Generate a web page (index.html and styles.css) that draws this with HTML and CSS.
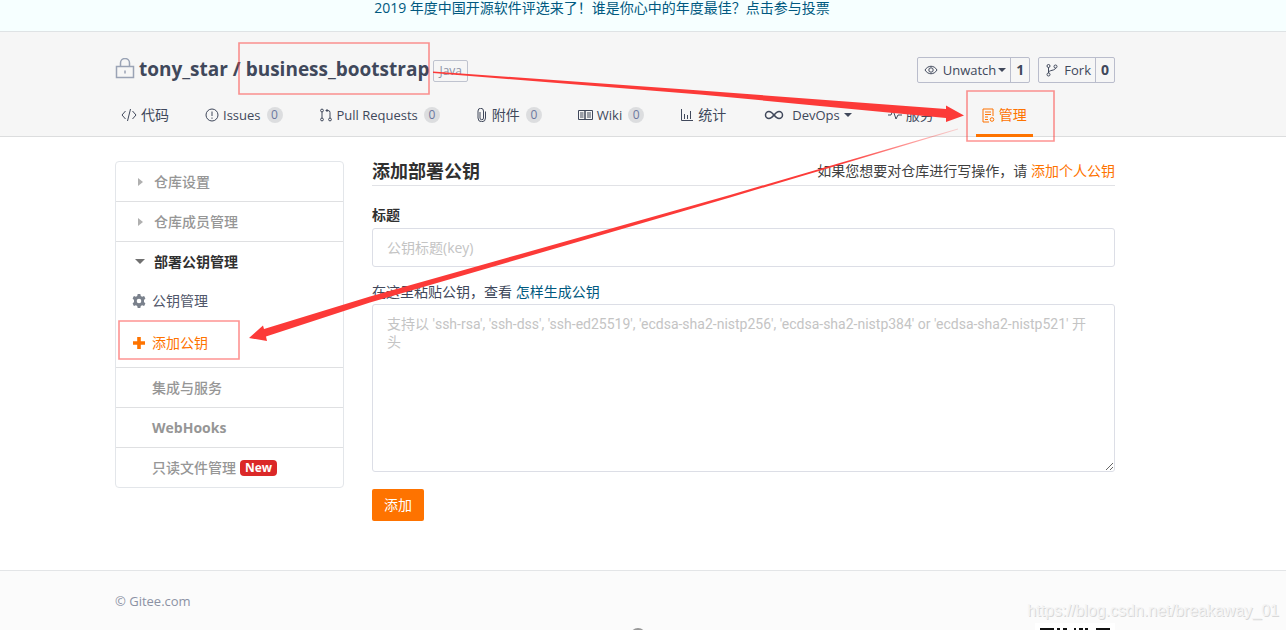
FILE: index.html
```
<!DOCTYPE html>
<html lang="zh-CN">
<head>
<meta charset="utf-8">
<title>添加部署公钥 - Gitee</title>
<link rel="stylesheet" href="styles.css">
</head>
<body>
<div class="banner"><a href="#">2019 年度中国开源软件评选来了！谁是你心中的年度最佳？点击参与投票</a></div>

<header class="header">
  <div class="container">
    <div class="repo-row">
      <h1 class="repo-title">
        <svg class="lock" viewBox="0 0 20 22" width="20" height="22"><path d="M1.500 8.500h17v11h-17zM5.500 8.500V5a4.500 4.500 0 0 1 9 0v3.500M10 12.500v3"/></svg>
        <span><a href="#">tony_star</a> / <a href="#">business_bootstrap</a></span>
        <span class="lang">Java</span>
      </h1>
      <div class="actions">
        <div class="action">
          <button type="button"><svg class="icon" viewBox="0 0 14 14" width="14" height="14"><path d="M1 7c3-5 9-5 12 0c-3 5-9 5-12 0z"/><circle cx="7" cy="7" r="2.200"/></svg>Unwatch<i class="caret"></i></button><a href="#">1</a>
        </div>
        <div class="action">
          <button type="button"><svg class="icon" viewBox="0 0 14 14" width="14" height="14"><circle cx="3.500" cy="3" r="1.500"/><circle cx="10.500" cy="3.500" r="1.500"/><circle cx="3.500" cy="11.500" r="1.500"/><path d="M3.500 4.500v5.500M10.500 5c0 3-7 1.500-7 5"/></svg>Fork</button><a href="#">0</a>
        </div>
      </div>
    </div>
    <nav class="tabs">
      <a href="#"><svg class="icon" viewBox="0 0 16 14" width="16" height="14"><path d="M4.500 3L1 7l3.500 4M11.500 3L15 7l-3.500 4M9.500 1l-3 12"/></svg>代码</a>
      <a class="latin" href="#"><svg class="icon" viewBox="0 0 14 14" width="14" height="14"><circle cx="7" cy="7" r="6"/><path d="M7 3.500v4.500M7 9.500v1.300"/></svg>Issues<span class="count">0</span></a>
      <a class="latin" href="#"><svg class="icon" viewBox="0 0 14 14" width="14" height="14"><circle cx="3" cy="2.500" r="1.400"/><circle cx="3" cy="11.500" r="1.400"/><circle cx="11" cy="11.500" r="1.400"/><path d="M3 4v6M11 10V4.500q0-2-2-2H7M8.500 1L7 2.500 8.500 4"/></svg>Pull Requests<span class="count">0</span></a>
      <a href="#"><svg class="icon" viewBox="0 0 12 14" width="12" height="14"><path d="M4 4v6a1.500 1.500 0 0 0 3.500 0V3a2 2 0 0 0-5.500 0v7a3.500 3.500 0 0 0 7.500 0V3.500"/></svg>附件<span class="count">0</span></a>
      <a class="latin" href="#"><svg class="icon" viewBox="0 0 15 14" width="15" height="14"><path d="M.5 2.500h6.500v9H.5zM7 2.500h7.500v9H7zM2 5h3.500M2 7h3.500M2 9h3.500M9 5h4M9 7h4M9 9h4"/></svg>Wiki<span class="count">0</span></a>
      <a href="#"><svg class="icon" viewBox="0 0 14 14" width="14" height="14"><path d="M1.500 1v11.500H13M4.500 6v5M7.500 7v4M10.500 3v8"/></svg>统计</a>
      <a class="latin" href="#"><svg class="icon infinity" viewBox="0 0 20 14" width="20" height="14"><path d="M10 7C8 4.500 7 3.500 5 3.500a3.500 3.500 0 0 0 0 7C7 10.500 8 9.500 10 7s3-3.500 5-3.500a3.500 3.500 0 0 1 0 7C13 10.500 12 9.500 10 7z"/></svg>DevOps<i class="caret"></i></a>
      <a href="#"><svg class="icon" viewBox="0 0 14 14" width="14" height="14"><path d="M0 7h3l2-5 3 9 2-4h4"/></svg>服务<i class="caret"></i></a>
      <a href="#" class="active"><svg class="icon" viewBox="0 0 13 15" width="13" height="15"><path d="M7 14H1V1h10v7M3 4h6M3 6.500h6M3 9h3M3 11.500h3"/><circle cx="10" cy="11.500" r="1.800"/></svg>管理</a>
    </nav>
  </div>
</header>

<main class="main">
  <div class="container columns">
    <aside class="side">
      <a class="item" href="#"><i class="tri"></i>仓库设置</a>
      <a class="item" href="#"><i class="tri"></i>仓库成员管理</a>
      <div class="group">
        <a class="item open" href="#"><i class="tri down"></i>部署公钥管理</a>
        <a class="sub" href="#"><svg viewBox="0 0 14 14" width="14" height="14"><path class="gear" fill-rule="evenodd" d="M5.700 0h2.600l.5 2 1.300.7 2-.6 1.300 2.300L12 5.900v2.200l1.400 1.500-1.300 2.300-2-.6-1.300.7-.5 2H5.700l-.5-2-1.300-.7-2 .6L.6 9.600 2 8.100V5.900L.6 4.400l1.300-2.300 2 .6L5.200 2zM7 4.700a2.300 2.300 0 1 0 0 4.600a2.300 2.300 0 0 0 0-4.600z"/></svg>公钥管理</a>
        <a class="sub current" href="#"><svg viewBox="0 0 14 14" width="14" height="14"><path class="plus" d="M5.200 1h3.600v4.200H13v3.600H8.800V13H5.200V8.800H1V5.200h4.200z"/></svg>添加公钥</a>
      </div>
      <a class="item plain" href="#">集成与服务</a>
      <a class="item plain bold" href="#">WebHooks</a>
      <a class="item plain" href="#">只读文件管理<span class="new">New</span></a>
    </aside>

    <form class="form">
      <div class="form-head">
        <h2>添加部署公钥</h2>
        <p>如果您想要对仓库进行写操作，请 <a href="#">添加个人公钥</a></p>
      </div>
      <label class="label" for="key-title">标题</label>
      <input id="key-title" class="field" type="text" placeholder="公钥标题(key)">
      <div class="hint"><label for="key-body">在这里粘贴公钥，查看</label> <a href="#">怎样生成公钥</a></div>
      <textarea id="key-body" class="field area" placeholder="支持以 'ssh-rsa', 'ssh-dss', 'ssh-ed25519', 'ecdsa-sha2-nistp256', 'ecdsa-sha2-nistp384' or 'ecdsa-sha2-nistp521' 开头"></textarea>
      <button class="submit" type="button">添加</button>
    </form>
  </div>
</main>

<footer class="footer">
  <div class="container footer-row">
    <span class="copy">© Gitee.com</span>
    <i class="dot"></i>
    <svg class="qr" viewBox="0 0 80 80" width="80" height="80"><path class="qr-bg" d="M0 0h80v80H0z"/><path d="M5 5h14v14H5zM22 5h3v4h-3zM28 5h4v3h-4zM39 5h2v5h-2zM44 5h4v3h-4zM50 5h3v6h-3zM61 5h14v14H61zM34 8h3v4h-3zM56 8h3v5h-3zM5 61h14v14H5zM25 25h28v28H25z"/></svg>
  </div>
</footer>

<div class="watermark">https://blog.csdn.net/breakaway_01</div>
<svg class="marks" viewBox="0 0 1286 630" width="1286" height="630">
  <defs><linearGradient id="fade" gradientUnits="userSpaceOnUse" x1="958" y1="129" x2="840" y2="165"><stop offset="0" stop-color="#fc3a38" stop-opacity=".2"/><stop offset="1" stop-color="#fc3a38"/></linearGradient></defs>
  <path class="box" d="M239 43h190v51H239zM967 91h87v50h-87zM119 321h120v38H119z"/>
  <path class="arrow" d="M433 71.500L700 90.500 946 109V105.500L964 115.500 946 122V118L700 94.500 433 73z"/>
  <path fill="url(#fade)" d="M958 128.500L730 195 370 296.500 264 329 263 325.500 249 338 267 341 266 336.500 370 302.500 730 197.500 958 129.500z"/>
</svg>
</body>
</html>
```
FILE: styles.css
```
* { box-sizing: border-box; }
body {
  margin: 0;
  height: 100vh;
  display: flex;
  flex-direction: column;
  overflow: hidden;
  position: relative;
  background: #fff;
  color: #40485b;
  font: 14px/20px "Open Sans", "Noto Sans CJK SC", sans-serif;
}
a { color: inherit; text-decoration: none; }
h1, h2, p { margin: 0; }
button, input, textarea { font: inherit; color: inherit; }
svg { flex: none; }
.banner {
  height: 32px;
  flex: none;
  padding-right: 82px;
  line-height: 16px;
  text-align: center;
  background: #f6ffff;
  border-bottom: 1px solid #dfe3e5;
  color: #005980;
}
.header {
  flex: none;
  padding-right: 56px;
  background: #f6f6f6;
  border-bottom: 1px solid #dcddde;
}
.container { width: 100%; max-width: 1000px; margin: 0 auto; }
.repo-row {
  display: flex;
  justify-content: space-between;
  align-items: center;
  height: 76px;
}
.repo-title { display: flex; align-items: center; gap: 4px; padding-bottom: 2px; font-size: 19px; line-height: 28px; }
.lock { fill: none; stroke: #9aa3b5; stroke-width: 1.500; }
.lang {
  margin-top: 4px;
  padding: 0 5px;
  border: 1px solid #bfc3cf;
  border-radius: 2px;
  font-size: 12px;
  font-weight: 400;
  line-height: 20px;
  color: #8c92a4;
}
.actions { display: flex; gap: 8px; font-size: 13px; }
.action { display: flex; height: 26px; border: 1px solid #babdcc; border-radius: 2px; }
.action button {
  display: flex;
  align-items: center;
  gap: 5px;
  padding: 0 4px 0 6px;
  border: 0;
  background: none;
}
.action a { padding: 0 5px; border-left: 1px solid #babdcc; font-size: 14px; font-weight: 700; line-height: 24px; }
.icon { fill: none; stroke: currentColor; stroke-width: 1; }
.infinity { stroke-width: 1.500; margin: 0 4px 0 2px; }
.caret { border: 4px solid transparent; border-top-color: currentColor; border-bottom: 0; }
.action .caret { margin-left: -3px; }
.tabs { display: flex; gap: 24px; height: 28px; }
.tabs a {
  display: flex;
  align-items: center;
  gap: 4px;
  height: 29px;
  padding: 0 6px 15px;
  white-space: nowrap;
}
.tabs .latin { font-size: 13px; }
.tabs .active { color: #fe7300; border-bottom: 3px solid #fe7300; padding-bottom: 12px; }
.count {
  min-width: 16px;
  padding: 0 4px;
  margin-left: 2px;
  border-radius: 8px;
  background: #dcdddf;
  color: #6c78a0;
  font-size: 12px;
  line-height: 16px;
  text-align: center;
}
.main { flex: none; padding: 24px 56px 49px 0; }
.columns {
  display: grid;
  grid-template-columns: 229px 1fr;
  gap: 28px;
  align-items: start;
}
.side { border: 1px solid #e3e6ea; border-radius: 4px; color: #969696; }
.item { display: flex; align-items: center; height: 40px; padding-left: 22px; font-weight: 500; }
.item:first-child { height: 39px; }
.side > * + * { border-top: 1px solid #dfe0e2; }
.plain { padding-left: 36px; }
.bold { font-weight: 700; }
.open { color: #303030; font-weight: 700; }
.tri { width: 8px; margin-right: 8px; }
.tri::before { content: ""; display: block; width: 0; border: 4px solid transparent; border-left: 5px solid #b0b0b0; border-right: 0; }
.tri.down::before { margin-left: -3px; border: 5px solid transparent; border-top-color: #707070; border-bottom: 0; }
.group { padding-bottom: 2px; }
.sub { display: flex; align-items: center; gap: 6px; height: 40px; padding-left: 16px; color: #50566a; }
.sub.current { height: 44px; color: #fe7300; }
.gear { fill: #7a818c; }
.plus { fill: #fe7300; }
.new { margin-left: 4px; padding: 0 5px; border-radius: 4px; background: #db2828; color: #fff; font-size: 12px; font-weight: 700; line-height: 16px; }
.form-head { display: flex; justify-content: space-between; align-items: flex-start; height: 25px; border-bottom: 1px solid #e1e2e6; color: #404040; }
.form-head h2 { font-size: 18px; line-height: 20px; color: #303030; }
.form-head a { color: #fe7300; }
.label { display: block; margin: 19px 0 3px; font-weight: 700; color: #303030; }
.field {
  display: block;
  width: 100%;
  height: 39px;
  padding: 0 14px;
  border: 1px solid #dcdee6;
  border-radius: 3px;
  background: #fff;
}
.field::placeholder { color: #c4c4c4; }
.hint { margin: 15px 0 2px; }
.hint a { color: #005980; }
.area {
  height: 168px;
  padding: 10px 24px 10px 14px;
  font-family: Roboto, "Noto Sans CJK SC", sans-serif;
  line-height: 18px;
  resize: vertical;
}
.submit { margin-top: 17px; height: 32px; padding: 0 12px; border: 0; border-radius: 2px; background: #fe7300; color: #fff; }
.footer { flex: 1; min-height: 0; overflow: hidden; padding-right: 56px; background: #fbfbfb; border-top: 1px solid #e3e5e7; color: #8c92a4; }
.footer-row { display: grid; grid-template-columns: 1fr auto 1fr; align-items: start; }
.copy { padding-top: 20px; font-size: 13px; }
.dot { width: 16px; height: 16px; margin: 57px 0 0 46px; border-radius: 50%; background: #999; }
.qr { justify-self: end; margin-top: 52px; fill: #111; }
.qr-bg { fill: #fff; }
.watermark { position: absolute; right: 7px; bottom: 10px; font: 16px/18px "Liberation Sans", sans-serif; color: #f4f4f4; text-shadow: 1px 1px 0 #d8d8d8; }
.marks { position: absolute; left: 0; top: 0; pointer-events: none; }
.box { fill: none; stroke: #fc3a38; stroke-opacity: .55; stroke-width: 1.600; }
.arrow { fill: #fc3a38; }
```
